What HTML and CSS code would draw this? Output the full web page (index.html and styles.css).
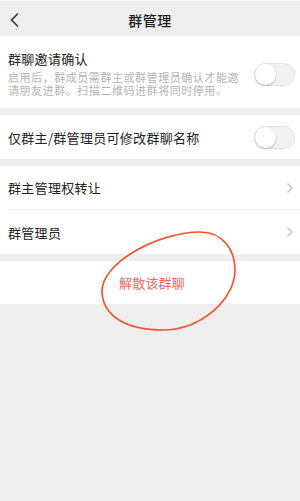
FILE: index.html
```html
<!DOCTYPE html>
<html lang="zh-CN">
<head>
<meta charset="utf-8">
<link rel="stylesheet" href="styles.css">
</head>
<body>
<div class="page">
  <header class="navbar">
    <svg class="back" width="12" height="16" viewBox="0 0 12 16"><path d="M9 1.5 L2.5 8 L9 14.5" fill="none" stroke="#333" stroke-width="1.6"/></svg>
    <div class="title">群管理</div>
  </header>

  <section class="group">
    <div class="row row-tall">
      <div class="text">
        <div class="label">群聊邀请确认</div>
        <div class="desc">启用后，群成员需群主或群管理员确认才能邀请朋友进群。扫描二维码进群将同时停用。</div>
      </div>
      <div class="switch"><span class="knob"></span></div>
    </div>
  </section>

  <section class="group">
    <div class="row">
      <div class="label">仅群主/群管理员可修改群聊名称</div>
      <div class="switch"><span class="knob"></span></div>
    </div>
  </section>

  <section class="group">
    <div class="row row-link">
      <div class="label">群主管理权转让</div>
      <svg class="chev" width="8" height="12" viewBox="0 0 8 12"><path d="M1.5 1.5 L6 6 L1.5 10.5" fill="none" stroke="#c2c2c2" stroke-width="1.3"/></svg>
    </div>
    <div class="row">
      <div class="label">群管理员</div>
      <svg class="chev" width="8" height="12" viewBox="0 0 8 12"><path d="M1.5 1.5 L6 6 L1.5 10.5" fill="none" stroke="#c2c2c2" stroke-width="1.3"/></svg>
    </div>
  </section>

  <section class="group">
    <div class="row row-center">
      <div class="danger">解散该群聊</div>
    </div>
  </section>

  <svg class="mark" width="300" height="501" viewBox="0 0 300 501">
    <path d="M102 292 C101 262 160 232 200 232 C223 232 235 250 235 270 C235 301 199 330 163 330 C126 330 103 316 102 292 Z" fill="none" stroke="#f2542d" stroke-width="1.7"/>
  </svg>
</div>
</body>
</html>
```

FILE: styles.css
```css
* { box-sizing: border-box; }
html, body { margin: 0; padding: 0; }
body {
  width: 300px;
  height: 501px;
  background: #eeeeee;
  font-family: "Noto Sans CJK SC", "Noto Sans", sans-serif;
  overflow: hidden;
}
.page {
  position: relative;
  width: 300px;
  height: 501px;
  display: flex;
  flex-direction: column;
  gap: 7px;
}
.navbar {
  height: 36px;
  border-top: 1px solid #f8f8f8;
  background: #eeeeee;
  position: relative;
  display: flex;
  align-items: center;
  justify-content: center;
  margin-bottom: -7px;
}
.back {
  position: absolute;
  left: 9px;
  top: 11px;
}
.title {
  font-size: 14px;
  font-weight: 500;
  color: #1c1c1c;
  letter-spacing: 0.5px;
  padding-top: 3px;
}
.group {
  background: #ffffff;
  padding-left: 8px;
}
.row {
  height: 44px;
  display: flex;
  align-items: center;
  justify-content: space-between;
  padding-right: 5px;
}
.row-tall {
  height: 72px;
  align-items: flex-start;
  padding-top: 13px;
}
.row-tall .text { flex: none; width: 236px; }
.row-tall .switch { margin-top: 14px; }
.row-link { border-bottom: 1px solid #f2f2f2; }
.row-center { justify-content: center; height: 43px; margin-left: -8px; padding-right: 0; }
.label {
  font-size: 13px;
  color: #222222;
  letter-spacing: 0.3px;
}
.desc {
  margin-top: 3px;
  width: 256px;
  font-size: 12px;
  line-height: 13.6px;
  color: #b4b4b4;
  letter-spacing: 0.6px;
  transform: scale(0.9167);
  transform-origin: 0 0;
}
.switch {
  width: 41px;
  height: 23px;
  border-radius: 12px;
  background: #f2f2f2;
  border: 1px solid #e2e2e2;
  position: relative;
  flex: none;
}
.knob {
  position: absolute;
  left: 0;
  top: 0;
  width: 21px;
  height: 21px;
  border-radius: 50%;
  background: #ffffff;
  box-shadow: 0 1px 2px rgba(0,0,0,0.25);
}
.chev { margin-right: 1px; }
.danger {
  font-size: 13px;
  color: #f0655f;
  letter-spacing: 0.2px;
  padding-left: 4px;
}
.mark {
  position: absolute;
  left: 0;
  top: 0;
  pointer-events: none;
}
```
